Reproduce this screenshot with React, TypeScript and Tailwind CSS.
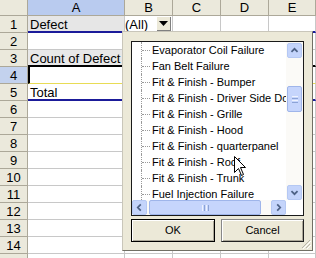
import React from 'react'

const rows = [1, 2, 3, 4, 5, 6, 7, 8, 9, 10, 11, 12, 13, 14, 15]
const cols = ['A', 'B', 'C', 'D', 'E']

const items = [
  'Evaporator Coil Failure',
  'Fan Belt Failure',
  'Fit & Finish - Bumper',
  'Fit & Finish - Driver Side Door',
  'Fit & Finish - Grille',
  'Fit & Finish - Hood',
  'Fit & Finish - quarterpanel',
  'Fit & Finish - Roof',
  'Fit & Finish - Trunk',
  'Fuel Injection Failure',
]

// bottom border per row, spans columns A..E
const rowLine: Record<number, string> = {
  1: 'border-b-2 border-b-[#1b1b9a]',
  3: 'border-b-2 border-b-black',
  4: 'border-b-[#e8dc55]',
  5: 'border-b-2 border-b-[#1b1b9a]',
}

const ScrollBtn = ({ dir }: { dir: 'up' | 'down' | 'left' | 'right' }) => {
  const pts = {
    up: '4,9 7.5,5.5 11,9',
    down: '4,6 7.5,9.5 11,6',
    left: '9,4 5.5,7.5 9,11',
    right: '6,4 9.5,7.5 6,11',
  }[dir]
  return (
    <div className="flex h-[15px] w-[15px] items-center justify-center rounded-[2px] border border-[#b5c8f3] bg-[#c4d4fb]">
      <svg width="15" height="15" viewBox="0 0 15 15">
        <polyline points={pts} fill="none" stroke="#4d6185" strokeWidth="2" />
      </svg>
    </div>
  )
}

export default function App() {
  return (
    <div className="relative h-[258px] w-[316px] overflow-hidden bg-white font-['Liberation_Sans',Arial,sans-serif] text-[13px] text-black">
      {/* sheet */}
      <div className="grid grid-cols-[28px_97px_48px_48px_48px_1fr]">
        <div className="h-[16px] border-b border-r border-[#aca899] bg-[#ebe9dc]" />
        {cols.map((c) => (
          <div
            key={c}
            className={`flex h-[16px] items-center justify-center border-b border-r border-[#aca899] leading-none ${
              c === 'A' ? 'bg-[#b9cbef]' : 'bg-[#ebe9dc]'
            }`}
          >
            {c}
          </div>
        ))}
        {rows.map((r) => (
          <React.Fragment key={r}>
            <div
              className={`flex h-[17px] items-center justify-center border-b border-r border-[#aca899] leading-none ${
                r === 4 ? 'bg-[#c3d2ee]' : 'bg-[#ebe9dc]'
              }`}
            >
              {r < 15 ? r : ''}
            </div>
            {cols.map((c) => {
              const line = rowLine[r] ?? ''
              let cls = `relative h-[17px] border-b border-r border-[#c8c8c8] ${line}`
              if (r === 1 && c === 'A') cls += ' bg-[#e6e6e6]'
              if (r === 3 && c === 'A') cls += ' bg-[#e8e8e8]'
              if (r === 4 && c === 'A') cls += ' border-l-2 border-l-black'
              return (
                <div key={c} className={cls}>
                  {r === 1 && c === 'A' && <span className="absolute left-[2px] top-[1px] leading-[15px]">Defect</span>}
                  {r === 3 && c === 'A' && (
                    <span className="absolute left-[2px] top-[1px] whitespace-nowrap leading-[15px]">Count of Defect</span>
                  )}
                  {r === 5 && c === 'A' && <span className="absolute left-[2px] top-[1px] leading-[15px]">Total</span>}
                  {r === 1 && c === 'B' && (
                    <>
                      <span className="absolute left-[0px] top-[1px] leading-[15px]">(All)</span>
                      <div className="absolute left-[32px] top-[1px] flex h-[14px] w-[14px] items-center justify-center border-b border-r border-[#808080] bg-[#ece9d8]">
                        <svg width="9" height="5" viewBox="0 0 9 5">
                          <polygon points="0,0 9,0 4.5,5" fill="#000" />
                        </svg>
                      </div>
                    </>
                  )}
                </div>
              )
            })}
          </React.Fragment>
        ))}
      </div>

      {/* page field dropdown */}
      <div className="absolute left-[122px] top-[31px] flex h-[220px] w-[191px] flex-col border border-b-[#716f64] border-l-[#c9c6ba] border-r-[#716f64] border-t-[#c9c6ba] bg-[#ece9d8] pl-[8px] pt-[9px] font-['Liberation_Sans',Tahoma,sans-serif] text-[11px]">
        <div className="flex h-[175px] w-[173px] flex-col border border-[#1a1a1a] bg-white">
          <div className="flex h-[158px]">
            <div className="w-[154px] overflow-hidden">
              {items.map((t) => (
                <div key={t} className="flex h-[16px] items-center whitespace-nowrap">
                  <div className="w-[9px] shrink-0" />
                  <div className="flex h-full w-[11px] shrink-0 items-center border-l border-dotted border-[#9a9a9a]">
                    <div className="w-[8px] border-t border-dotted border-[#9a9a9a]" />
                  </div>
                  <span className="leading-none">{t}</span>
                </div>
              ))}
            </div>
            <div className="flex w-[17px] flex-col items-center bg-[#fbfaf7] pt-[1px]">
              <ScrollBtn dir="up" />
              <div className="mt-[28px] flex h-[26px] w-[15px] flex-col items-center justify-center gap-[1px] rounded-[2px] border border-[#9fb5ea] bg-[#c6d5fc]">
                <div className="h-px w-[6px] bg-[#eef2fd]" />
                <div className="h-px w-[6px] bg-[#8ca3d6]" />
                <div className="h-px w-[6px] bg-[#eef2fd]" />
                <div className="h-px w-[6px] bg-[#8ca3d6]" />
              </div>
              <div className="flex-1" />
              <ScrollBtn dir="down" />
            </div>
          </div>
          <div className="flex h-[15px]">
            <div className="flex w-[154px] items-center bg-[#fbfaf7]">
              <ScrollBtn dir="left" />
              <div className="ml-[2px] flex h-[15px] w-[112px] items-center justify-center gap-[1px] rounded-[2px] border border-[#9fb5ea] bg-[#c6d5fc]">
                <div className="h-[6px] w-px bg-[#eef2fd]" />
                <div className="h-[6px] w-px bg-[#8ca3d6]" />
                <div className="h-[6px] w-px bg-[#eef2fd]" />
                <div className="h-[6px] w-px bg-[#8ca3d6]" />
              </div>
              <div className="flex-1" />
              <ScrollBtn dir="right" />
            </div>
            <div className="w-[17px] bg-white" />
          </div>
        </div>
        <div className="mt-[3px] flex w-[173px] gap-[6px]">
          <button className="flex h-[23px] w-[84px] items-center justify-center border border-black bg-[#ece9d8] shadow-[inset_1px_1px_0_#fff,inset_-1px_-1px_0_#aca899]">
            OK
          </button>
          <button className="flex h-[23px] w-[83px] items-center justify-center border border-b-[#222] border-l-[#888] border-r-[#222] border-t-[#888] bg-[#ece9d8] shadow-[inset_1px_1px_0_#fff,inset_-1px_-1px_0_#aca899]">
            Cancel
          </button>
        </div>
        {/* resize grip */}
        <svg className="absolute bottom-[1px] right-[1px]" width="11" height="11" viewBox="0 0 11 11">
          <line x1="10" y1="2" x2="2" y2="10" stroke="#b8b5a8" />
          <line x1="10" y1="6" x2="6" y2="10" stroke="#b8b5a8" />
          <line x1="11" y1="3" x2="3" y2="11" stroke="#fff" />
          <line x1="11" y1="7" x2="7" y2="11" stroke="#fff" />
        </svg>
      </div>

      {/* mouse pointer */}
      <svg className="absolute left-[234px] top-[156px]" width="13" height="21" viewBox="0 0 13 21">
        <path d="M0.5 0.5 L0.5 16.5 L4.5 12.5 L7.5 19.5 L9.5 18.5 L6.5 11.5 L11.5 11.5 Z" fill="#fff" stroke="#000" strokeWidth="1" />
      </svg>
    </div>
  )
}
